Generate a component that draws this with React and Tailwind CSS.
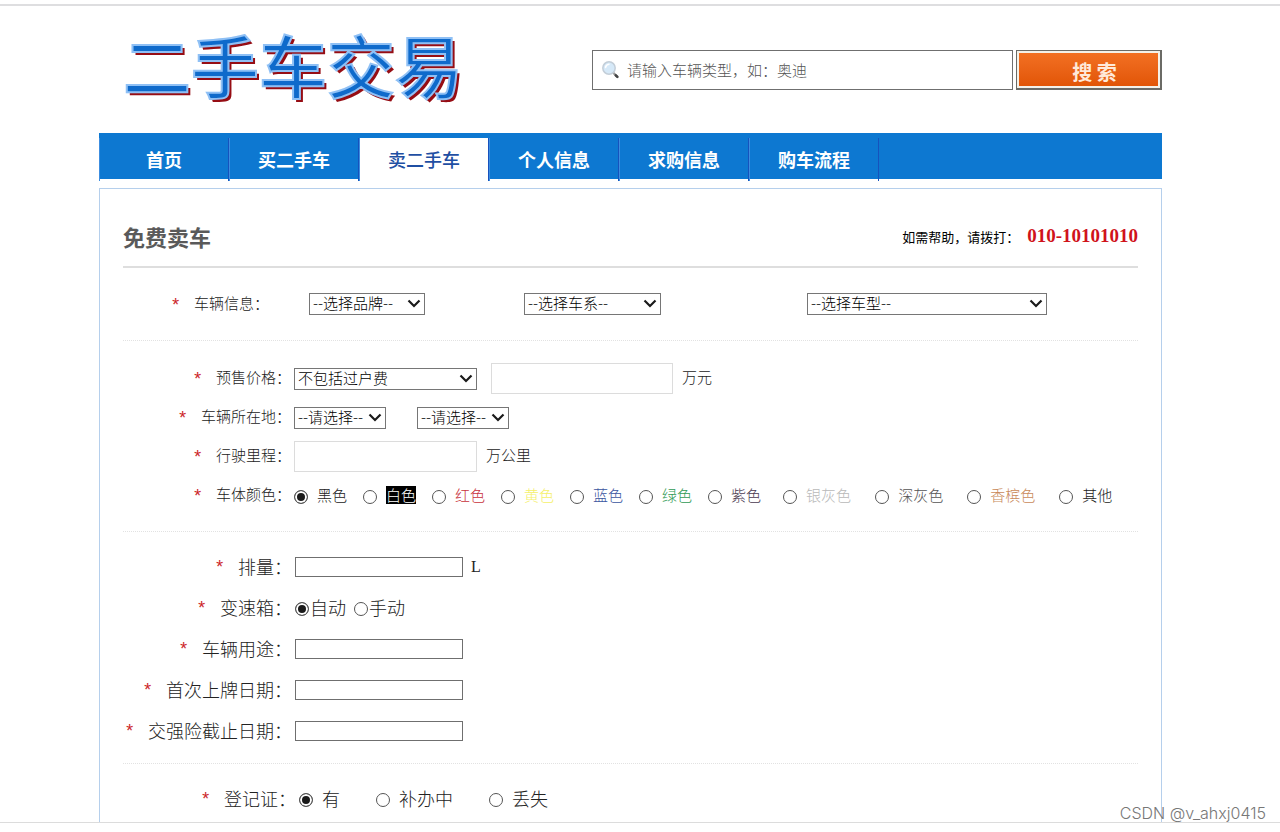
import React, { useState } from 'react';

const navItems = ['首页', '买二手车', '卖二手车', '个人信息', '求购信息', '购车流程'];

const shortColors = [
  { name: '黑色', className: 'text-[#222]' },
  { name: '白色', className: 'bg-black text-white' },
  { name: '红色', className: 'text-[#c8323c]' },
  { name: '黄色', className: 'text-[#f5f06a]' },
  { name: '蓝色', className: 'text-[#3a55a0]' },
  { name: '绿色', className: 'text-[#2f9a55]' },
  { name: '紫色', className: 'text-[#4a3a50]' },
];

const longColors = [
  { name: '银灰色', className: 'text-[#b9b9b9]' },
  { name: '深灰色', className: 'text-[#555]' },
  { name: '香槟色', className: 'text-[#c98a5a]' },
  { name: '其他', className: 'text-[#222]' },
];

const SearchIcon = () => (
  <svg viewBox="0 0 20 20" className="pointer-events-none absolute left-[9px] top-[10px] size-5" aria-hidden="true">
    <path d="M12.5 13 L16 16.5" stroke="#999" strokeWidth="2.4" strokeLinecap="round" />
    <path d="M14.8 15.3 L16.4 16.9" stroke="#444" strokeWidth="2.6" strokeLinecap="round" />
    <circle cx="8" cy="8" r="6.2" fill="#d6e9f8" stroke="#c3ced8" strokeWidth="1.5" />
    <path d="M4.5 7.5 A4 4 0 0 1 8 4.2" fill="none" stroke="#fff" strokeWidth="1.5" strokeLinecap="round" />
  </svg>
);

const Select = ({ id, label, options, className }) => (
  <div className={`relative ${className}`}>
    <select
      id={id}
      aria-label={label}
      className="block h-[22px] w-full appearance-none border border-[#767676] bg-white pb-0.5 pl-[3px] pr-5 text-[15px] leading-[18px] text-black"
    >
      {options.map((option) => (
        <option key={option}>{option}</option>
      ))}
    </select>
    <svg viewBox="0 0 14 9" className="pointer-events-none absolute right-1 top-[6px] h-[9px] w-[14px]" aria-hidden="true">
      <path d="M1.5 1.5 L7 7 L12.5 1.5" fill="none" stroke="#1a1a1a" strokeWidth="2.2" />
    </svg>
  </div>
);

const Radio = ({ name, label, checked, onChange, className = '', gap = 'gap-[9px]' }) => (
  <label className={`flex items-center ${gap}`}>
    <input
      type="radio"
      name={name}
      checked={checked}
      onChange={() => onChange(label)}
      className="mt-1 size-[14px] shrink-0 appearance-none rounded-full border border-[#555] bg-white checked:bg-[#1a1a1a] checked:shadow-[inset_0_0_0_2px_white]"
    />
    <span className={`leading-[18px] ${className}`}>{label}</span>
  </label>
);

const Star = () => (
  <span className="mr-[13px] pt-[5px] font-['Liberation_Mono'] text-lg leading-5 text-[#cc1f2b]">*</span>
);

const Row = ({ label, htmlFor, width, height = 'h-[41px]', children }) => (
  <div className={`flex items-center ${height}`}>
    <div className={`flex shrink-0 items-center justify-end pb-0.5 ${width}`}>
      <Star />
      {htmlFor ? <label htmlFor={htmlFor}>{label}</label> : <span>{label}</span>}
    </div>
    {children}
  </div>
);

const PlainInput = ({ id }) => (
  <input id={id} type="text" className="h-5 w-[168px] border border-[#6f6f6f] bg-white px-1 text-sm" />
);

export default function App() {
  const [color, setColor] = useState('黑色');
  const [gearbox, setGearbox] = useState('自动');
  const [certificate, setCertificate] = useState('有');

  return (
    <div className="relative border-b border-[#dcdcdc] bg-white pl-[99px] pr-[118px] pt-1 font-['Noto_Sans_CJK_SC',sans-serif] text-[#222]">
      <div className="-ml-[99px] -mr-[118px] h-0.5 bg-[#dedee0]" />

      <header className="flex h-[127px] items-center justify-between pl-6">
        <div className="flex items-end pb-3">
          <h1 className="text-[68px] font-medium leading-[80px] text-[#0f6acb] [-webkit-text-stroke:2px_#8fc0f5] [text-shadow:3px_3px_0_#960d14]">
            二手车交易
          </h1>
        </div>
        <form className="flex items-center gap-[3px]" onSubmit={(e) => e.preventDefault()}>
          <div className="relative">
            <SearchIcon />
            <input
              type="search"
              aria-label="搜索车辆"
              placeholder="请输入车辆类型，如：奥迪"
              className="block h-10 w-[421px] border border-[#6f6f6f] pl-[34px] pr-2 text-[15px] font-light placeholder:text-[#555]"
            />
          </div>
          <button
            type="submit"
            className="h-10 w-[146px] border border-b-2 border-r-2 border-[#6b6b66] bg-[#f4f1e8] p-0.5"
          >
            <span className="flex h-full items-center justify-center bg-linear-to-b from-[#f27022] to-[#e25505] pl-3 pt-1.5 text-xl font-bold text-[#ffe9d9]">
              搜 索
            </span>
          </button>
        </form>
      </header>

      <nav className="flex h-[46px] bg-[#0d78d1] pt-[5px]">
        {navItems.map((item) => (
          <a
            key={item}
            href="#"
            className={`flex h-[43px] w-[130px] items-center justify-center border-l border-r border-l-[#3c8de0] border-r-[#1652bd] pb-0.5 text-lg ${
              item === '卖二手车' ? 'bg-white font-medium text-[#1f4fa3]' : 'font-bold text-white'
            }`}
          >
            {item}
          </a>
        ))}
      </nav>

      <main className="mt-[9px] border border-b-0 border-[#b5cfec] px-[23px] text-[15px] font-light">
        <div className="flex h-[79px] items-center justify-between border-b-2 border-[#dedede] pt-[18px]">
          <h2 className="text-[22px] font-bold text-[#5a5a5a]">免费卖车</h2>
          <p className="flex items-center text-[13px] font-normal text-black">
            如需帮助，请拨打：
            <strong className="ml-2 font-['Liberation_Serif',serif] text-[19px] font-bold text-[#d0121b]">010-10101010</strong>
          </p>
        </div>

        <section className="border-b border-dotted border-[#e2e2e2] py-4">
          <Row label="车辆信息：" htmlFor="brand" width="w-[146px]" height="h-10">
            <Select id="brand" options={['--选择品牌--']} className="ml-10 w-[116px]" />
            <Select id="series" label="选择车系" options={['--选择车系--']} className="ml-[99px] w-[137px]" />
            <Select id="model" label="选择车型" options={['--选择车型--']} className="ml-[146px] w-[240px]" />
          </Row>
        </section>

        <section className="border-b border-dotted border-[#e2e2e2] pb-4 pt-[18px]">
          <Row label="预售价格：" htmlFor="price-type" width="w-[168px]" height="h-[39px]">
            <Select id="price-type" options={['不包括过户费', '包括过户费']} className="ml-[3px] w-[183px]" />
            <input id="price" type="text" aria-label="预售价格（万元）" className="ml-[14px] h-[31px] w-[182px] border border-[#dcdcdc] px-2" />
            <label htmlFor="price" className="ml-[9px] pb-0.5">万元</label>
          </Row>
          <Row label="车辆所在地：" htmlFor="province" width="w-[168px]" height="h-[39px]">
            <Select id="province" options={['--请选择--']} className="ml-[3px] w-[92px]" />
            <Select id="city" label="城市" options={['--请选择--']} className="ml-[31px] w-[92px]" />
          </Row>
          <Row label="行驶里程：" htmlFor="mileage" width="w-[168px]" height="h-[39px]">
            <input id="mileage" type="text" className="ml-[3px] h-[31px] w-[183px] border border-[#dcdcdc] px-2" />
            <span className="ml-[9px] pb-0.5">万公里</span>
          </Row>
          <Row label="车体颜色：" width="w-[168px]" height="h-[39px]">
            <div role="radiogroup" aria-label="车体颜色" className="ml-[3px] flex gap-[22px] pb-0.5">
              <div className="flex gap-4">
                {shortColors.map((c) => (
                  <Radio key={c.name} name="color" label={c.name} className={c.className} checked={color === c.name} onChange={setColor} />
                ))}
              </div>
              <div className="flex gap-6">
                {longColors.map((c) => (
                  <Radio key={c.name} name="color" label={c.name} className={c.className} checked={color === c.name} onChange={setColor} />
                ))}
              </div>
            </div>
          </Row>
        </section>

        <section className="border-b border-dotted border-[#e2e2e2] pb-3 pt-[14px] text-lg">
          <Row label="排量：" htmlFor="displacement" width="mr-[3px] w-[169px]">
            <PlainInput id="displacement" />
            <span className="ml-2 font-['Liberation_Serif',serif] text-base font-normal">L</span>
          </Row>
          <Row label="变速箱：" width="mr-[3px] w-[169px]">
            <div role="radiogroup" aria-label="变速箱" className="flex gap-2 pb-0.5">
              {['自动', '手动'].map((item) => (
                <Radio key={item} name="gearbox" label={item} gap="gap-px" checked={gearbox === item} onChange={setGearbox} />
              ))}
            </div>
          </Row>
          <Row label="车辆用途：" htmlFor="usage" width="mr-[3px] w-[169px]">
            <PlainInput id="usage" />
          </Row>
          <Row label="首次上牌日期：" htmlFor="first-plate" width="mr-[3px] w-[169px]">
            <PlainInput id="first-plate" />
          </Row>
          <Row label="交强险截止日期：" htmlFor="insurance-end" width="mr-[3px] w-[169px]">
            <PlainInput id="insurance-end" />
          </Row>
        </section>

        <section className="pb-[3px] pt-[14px] text-lg">
          <Row label="登记证：" width="w-[173px]">
            <div role="radiogroup" aria-label="登记证" className="ml-[3px] flex gap-9 pb-0.5">
              {['有', '补办中', '丢失'].map((item) => (
                <Radio key={item} name="certificate" label={item} checked={certificate === item} onChange={setCertificate} />
              ))}
            </div>
          </Row>
        </section>
      </main>

      <span className="absolute bottom-0 right-[14px] font-['Inter',sans-serif] text-base font-light leading-[18px] text-[#777]">
        CSDN @v_ahxj0415
      </span>
    </div>
  );
}
